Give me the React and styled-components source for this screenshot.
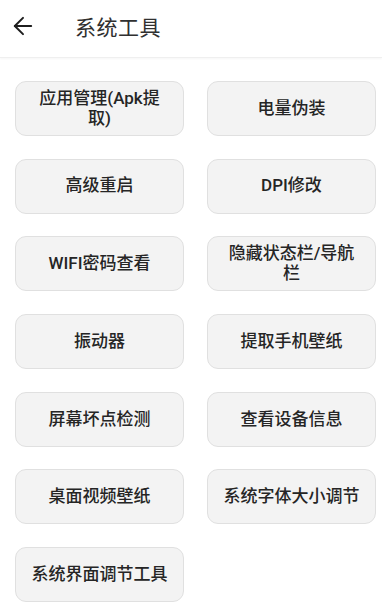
import React from "react";
import styled, { createGlobalStyle } from "styled-components";
import { ArrowLeft } from "lucide-react";

const Global = createGlobalStyle`
  html, body { margin: 0; padding: 0; background: #ffffff; }
  body { font-family: Roboto, "Noto Sans CJK SC", sans-serif; }
`;

const Page = styled.div`
  width: 382px;
  min-height: 614px;
  background: #ffffff;
`;

const Header = styled.header`
  height: 58px;
  display: flex;
  align-items: center;
  padding: 0 0 5px 9px;
  box-sizing: border-box;
  border-bottom: 1px solid #efefef;
  box-shadow: 0 1px 2px rgba(0, 0, 0, 0.04);
`;

const Back = styled.button`
  width: 28px;
  height: 28px;
  padding: 0;
  border: none;
  background: none;
  display: flex;
  align-items: center;
  justify-content: center;
  color: #1e1e1e;
  margin-right: 38px;
`;

const Title = styled.h1`
  margin: 0;
  font-family: "Noto Sans CJK SC", sans-serif;
  font-size: 21px;
  font-weight: 400;
  color: #303030;
  letter-spacing: 0.5px;
`;

const Grid = styled.div`
  display: grid;
  grid-template-columns: 169px 169px;
  grid-auto-rows: 55px;
  column-gap: 23px;
  row-gap: 22.7px;
  padding: 23px 0 0 15px;
`;

const Tool = styled.button`
  box-sizing: border-box;
  border: 1px solid #e0e0e0;
  border-radius: 11px;
  background: #f3f3f3;
  display: flex;
  align-items: center;
  justify-content: center;
  text-align: center;
  padding: 0 8px;
  font-family: Roboto, "Noto Sans CJK SC", sans-serif;
  font-size: 17px;
  font-weight: 500;
  line-height: 19.5px;
  color: #252525;
  white-space: nowrap;
`;

const tools = [
  ["应用管理(Apk提", "取)"],
  ["电量伪装"],
  ["高级重启"],
  ["DPI修改"],
  ["WIFI密码查看"],
  ["隐藏状态栏/导航", "栏"],
  ["振动器"],
  ["提取手机壁纸"],
  ["屏幕坏点检测"],
  ["查看设备信息"],
  ["桌面视频壁纸"],
  ["系统字体大小调节"],
  ["系统界面调节工具"],
];

export default function App() {
  return (
    <Page>
      <Global />
      <Header>
        <Back aria-label="返回">
          <ArrowLeft size={28} strokeWidth={1.7} />
        </Back>
        <Title>系统工具</Title>
      </Header>
      <Grid>
        {tools.map((lines, i) => (
          <Tool key={i}>
            <span>
              {lines.map((l, j) => (
                <React.Fragment key={j}>
                  {j > 0 && <br />}
                  {l}
                </React.Fragment>
              ))}
            </span>
          </Tool>
        ))}
      </Grid>
    </Page>
  );
}
